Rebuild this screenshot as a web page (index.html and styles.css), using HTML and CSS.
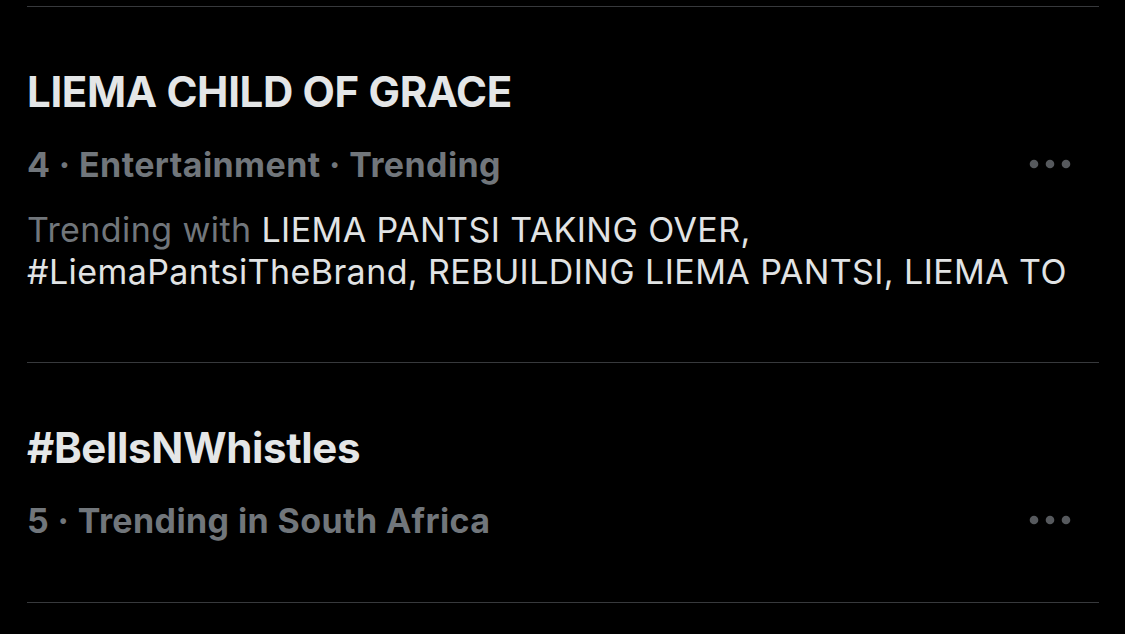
FILE: index.html
```html
<!DOCTYPE html>
<html lang="en">
<head>
<meta charset="utf-8">
<title>Trends</title>
<link rel="stylesheet" href="styles.css">
</head>
<body>
<main class="trends">
  <section class="trend trend--with-desc">
    <h2 class="trend-title">LIEMA CHILD OF GRACE</h2>
    <div class="trend-meta">
      <span class="meta-text">4 · Entertainment · Trending</span>
      <button class="more" aria-label="More">
        <svg width="42" height="10" viewBox="0 0 42 10"><circle cx="5" cy="5" r="4.3"/><circle cx="21" cy="5" r="4.3"/><circle cx="37" cy="5" r="4.3"/></svg>
      </button>
    </div>
    <p class="trend-desc"><span class="muted">Trending with</span> LIEMA PANTSI TAKING OVER,<br>#LiemaPantsiTheBrand, REBUILDING LIEMA PANTSI, LIEMA TO</p>
  </section>
  <section class="trend">
    <h2 class="trend-title">#BellsNWhistles</h2>
    <div class="trend-meta">
      <span class="meta-text">5 · Trending in South Africa</span>
      <button class="more" aria-label="More">
        <svg width="42" height="10" viewBox="0 0 42 10"><circle cx="5" cy="5" r="4.3"/><circle cx="21" cy="5" r="4.3"/><circle cx="37" cy="5" r="4.3"/></svg>
      </button>
    </div>
  </section>
  <div class="end-rule"></div>
</main>
</body>
</html>
```
FILE: styles.css
```css
html, body {
  margin: 0;
  padding: 0;
  background: #000;
}
body {
  font-family: Inter, "Noto Sans", "Liberation Sans", sans-serif;
  color: #e7e9ea;
  height: 634px;
  overflow: hidden;
}
.trends {
  margin-left: 27px;
  width: 1072px;
  padding-top: 6px;
}
.trend {
  border-top: 1px solid #37393c;
  padding: 60px 0 61px 0;
}
.trend-title {
  margin: 0;
  font-size: 42px;
  line-height: 50px;
  font-weight: 700;
  color: #e4e6e7;
  letter-spacing: -0.35px;
}
.trend-meta {
  margin-top: 28px;
  display: flex;
  align-items: center;
  justify-content: space-between;
  height: 40px;
}
.meta-text {
  font-size: 34px;
  line-height: 40px;
  font-weight: 700;
  color: #71767b;
  letter-spacing: 0.4px;
}
.more {
  background: none;
  border: 0;
  padding: 0;
  margin-right: 28px;
  margin-top: -2px;
  display: flex;
  fill: #56595d;
}
.trend-desc {
  margin: 24px 0 8px 0;
  font-size: 34px;
  line-height: 42px;
  font-weight: 400;
  color: #e1e3e4;
  letter-spacing: 0.42px;
  white-space: nowrap;
}
.muted {
  color: #71767b;
}
.end-rule {
  border-top: 1px solid #37393c;
}
```
